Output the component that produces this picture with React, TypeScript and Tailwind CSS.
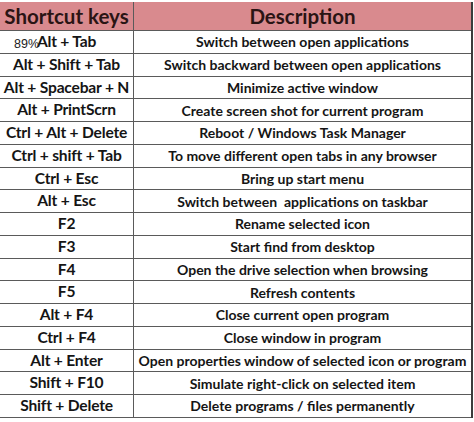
import React from 'react'

const rows: [string, string][] = [
  ['Alt + Tab', 'Switch between open applications'],
  ['Alt + Shift + Tab', 'Switch backward between open applications'],
  ['Alt + Spacebar + N', 'Minimize active window'],
  ['Alt + PrintScrn', 'Create screen shot for current program'],
  ['Ctrl + Alt + Delete', 'Reboot / Windows Task Manager'],
  ['Ctrl + shift + Tab', 'To move different open tabs in any browser'],
  ['Ctrl + Esc', 'Bring up start menu'],
  ['Alt + Esc', 'Switch between  applications on taskbar'],
  ['F2', 'Rename selected icon'],
  ['F3', 'Start find from desktop'],
  ['F4', 'Open the drive selection when browsing'],
  ['F5', 'Refresh contents'],
  ['Alt + F4', 'Close current open program'],
  ['Ctrl + F4', 'Close window in program'],
  ['Alt + Enter', 'Open properties window of selected icon or program'],
  ['Shift + F10', 'Simulate right-click on selected item'],
  ['Shift + Delete', 'Delete programs / files permanently'],
]

export default function App() {
  return (
    <div className="relative w-[474px] h-[422px] bg-white pt-[2px] font-['Lato',sans-serif] text-[#151515]">
      <div className="w-[473px] border-r-2 border-[#3c3c3c]">
        <div className="flex h-[29px] bg-[#d98a8e] border-b border-[#5a5a5a]">
          <div className="w-[134px] shrink-0 flex items-center justify-center border-r border-[#5a5a5a] text-[20.5px] font-bold text-[#2a1414]">
            Shortcut keys
          </div>
          <div className="flex-1 flex items-center justify-center text-[20.5px] font-bold text-[#2a1414]">
            Description
          </div>
        </div>
        {rows.map(([keys, desc]) => (
          <div key={keys} className="flex h-[22.76px] border-b border-[#5a5a5a]">
            <div className="w-[134px] shrink-0 flex items-center justify-center border-r border-[#5a5a5a] text-[15.6px] tracking-[-0.2px] font-bold whitespace-nowrap">
              {keys}
            </div>
            <div className="flex-1 flex items-center justify-center text-[14px] font-bold whitespace-pre">
              {desc}
            </div>
          </div>
        ))}
      </div>
      <div className="absolute left-[14px] top-[35px] text-[12.5px] text-[#222] font-['Liberation_Sans',sans-serif]">
        89%
      </div>
    </div>
  )
}
